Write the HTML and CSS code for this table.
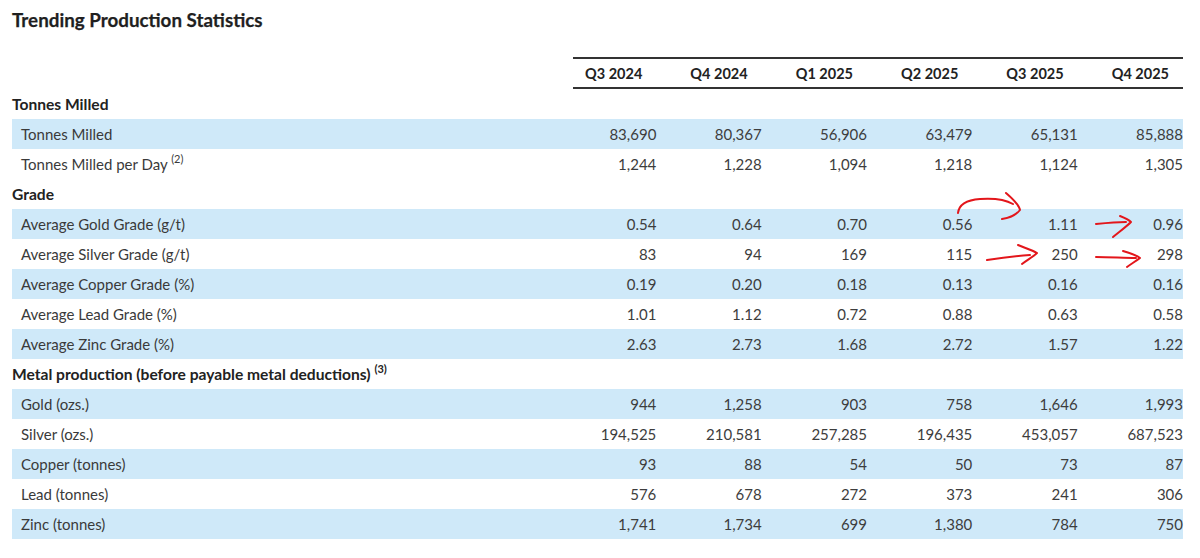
FILE: index.html
```html
<!DOCTYPE html>
<html lang="en">
<head>
<meta charset="utf-8">
<title>Trending Production Statistics</title>
<link rel="stylesheet" href="styles.css">
</head>
<body>
<div class="page">
  <h2 class="title">Trending Production Statistics</h2>
  <div class="stats">
    <div class="row head">
      <div></div>
      <div class="q first">Q3 2024</div>
      <div class="q">Q4 2024</div>
      <div class="q">Q1 2025</div>
      <div class="q">Q2 2025</div>
      <div class="q">Q3 2025</div>
      <div class="q">Q4 2025</div>
    </div>

    <div class="row section"><div class="label">Tonnes Milled</div></div>
    <div class="row alt"><div class="label">Tonnes Milled</div><div class="v">83,690</div><div class="v">80,367</div><div class="v">56,906</div><div class="v">63,479</div><div class="v">65,131</div><div class="v">85,888</div></div>
    <div class="row"><div class="label">Tonnes Milled per Day <sup>(2)</sup></div><div class="v">1,244</div><div class="v">1,228</div><div class="v">1,094</div><div class="v">1,218</div><div class="v">1,124</div><div class="v">1,305</div></div>

    <div class="row section"><div class="label">Grade</div></div>
    <div class="row alt"><div class="label">Average Gold Grade (g/t)</div><div class="v">0.54</div><div class="v">0.64</div><div class="v">0.70</div><div class="v">0.56</div><div class="v">1.11</div><div class="v">0.96</div></div>
    <div class="row"><div class="label">Average Silver Grade (g/t)</div><div class="v">83</div><div class="v">94</div><div class="v">169</div><div class="v">115</div><div class="v">250</div><div class="v">298</div></div>
    <div class="row alt"><div class="label">Average Copper Grade (%)</div><div class="v">0.19</div><div class="v">0.20</div><div class="v">0.18</div><div class="v">0.13</div><div class="v">0.16</div><div class="v">0.16</div></div>
    <div class="row"><div class="label">Average Lead Grade (%)</div><div class="v">1.01</div><div class="v">1.12</div><div class="v">0.72</div><div class="v">0.88</div><div class="v">0.63</div><div class="v">0.58</div></div>
    <div class="row alt"><div class="label">Average Zinc Grade (%)</div><div class="v">2.63</div><div class="v">2.73</div><div class="v">1.68</div><div class="v">2.72</div><div class="v">1.57</div><div class="v">1.22</div></div>

    <div class="row section"><div class="label">Metal production (before payable metal deductions) <sup>(3)</sup></div></div>
    <div class="row alt"><div class="label">Gold (ozs.)</div><div class="v">944</div><div class="v">1,258</div><div class="v">903</div><div class="v">758</div><div class="v">1,646</div><div class="v">1,993</div></div>
    <div class="row"><div class="label">Silver (ozs.)</div><div class="v">194,525</div><div class="v">210,581</div><div class="v">257,285</div><div class="v">196,435</div><div class="v">453,057</div><div class="v">687,523</div></div>
    <div class="row alt"><div class="label">Copper (tonnes)</div><div class="v">93</div><div class="v">88</div><div class="v">54</div><div class="v">50</div><div class="v">73</div><div class="v">87</div></div>
    <div class="row"><div class="label">Lead (tonnes)</div><div class="v">576</div><div class="v">678</div><div class="v">272</div><div class="v">373</div><div class="v">241</div><div class="v">306</div></div>
    <div class="row alt"><div class="label">Zinc (tonnes)</div><div class="v">1,741</div><div class="v">1,734</div><div class="v">699</div><div class="v">1,380</div><div class="v">784</div><div class="v">750</div></div>
  </div>

  <svg class="marks" viewBox="0 0 1200 558" width="1200" height="558" aria-hidden="true">
    <g fill="none" stroke="#e3161b" stroke-width="2" stroke-linecap="round" stroke-linejoin="round">
      <path d="M958 213 C959 204 967 200 980 199 C994 198 1006 200 1013 204"/>
      <path d="M1006 193 C1013 199 1019 205 1020 210 C1016 215 1009 218 1002 219"/>
      <path d="M1096 224 C1106 223 1116 222 1126 222"/>
      <path d="M1120 216 C1125 218 1129 220 1131 222 C1126 227 1119 232 1113 237"/>
      <path d="M987 260 C1000 258 1015 256 1030 255"/>
      <path d="M1018 245 C1025 248 1032 250 1037 253 C1033 257 1027 260 1022 264"/>
      <path d="M1096 257 C1110 257 1124 258 1136 258"/>
      <path d="M1123 251 C1130 253 1136 255 1140 258 C1136 261 1131 264 1127 267"/>
    </g>
  </svg>
</div>
</body>
</html>
```

FILE: styles.css
```css
html, body {
  margin: 0;
  padding: 0;
  background: #ffffff;
}

body {
  font-family: "Lato", "Liberation Sans", sans-serif;
  color: #3a3a3a;
}

.page {
  position: relative;
  width: 1200px;
  height: 558px;
  padding: 8px 17px 0 12px;
  box-sizing: border-box;
  overflow: hidden;
}

.title {
  margin: 0 0 25px 0;
  font-size: 18.8px;
  line-height: 24px;
  font-weight: 700;
  color: #1f1f1f;
  -webkit-text-stroke: 0.25px #1f1f1f;
}

.stats {
  display: flex;
  flex-direction: column;
}

.row {
  display: grid;
  grid-template-columns: 539px repeat(6, 1fr);
  height: 30px;
  align-items: center;
  font-size: 15px;
}

.row.alt {
  background: #cfe9f9;
}

.label {
  padding-left: 9px;
  white-space: nowrap;
}

.section .label {
  padding-left: 0;
  font-weight: 700;
  font-size: 15.6px;
  color: #222222;
}

.v {
  text-align: right;
  color: #3d3d3d;
}

sup {
  font-size: 11px;
  line-height: 0;
  vertical-align: 7px;
}

.head {
  height: 32px;
  align-items: stretch;
}

.q {
  display: flex;
  align-items: center;
  justify-content: flex-end;
  padding-right: 14px;
  border-top: 2px solid #333333;
  border-bottom: 2px solid #333333;
  font-weight: 700;
  color: #222222;
  font-size: 14.5px;
}

.q.first {
  margin-left: 22px;
}

.marks {
  position: absolute;
  top: 0;
  left: 0;
  pointer-events: none;
}
```
